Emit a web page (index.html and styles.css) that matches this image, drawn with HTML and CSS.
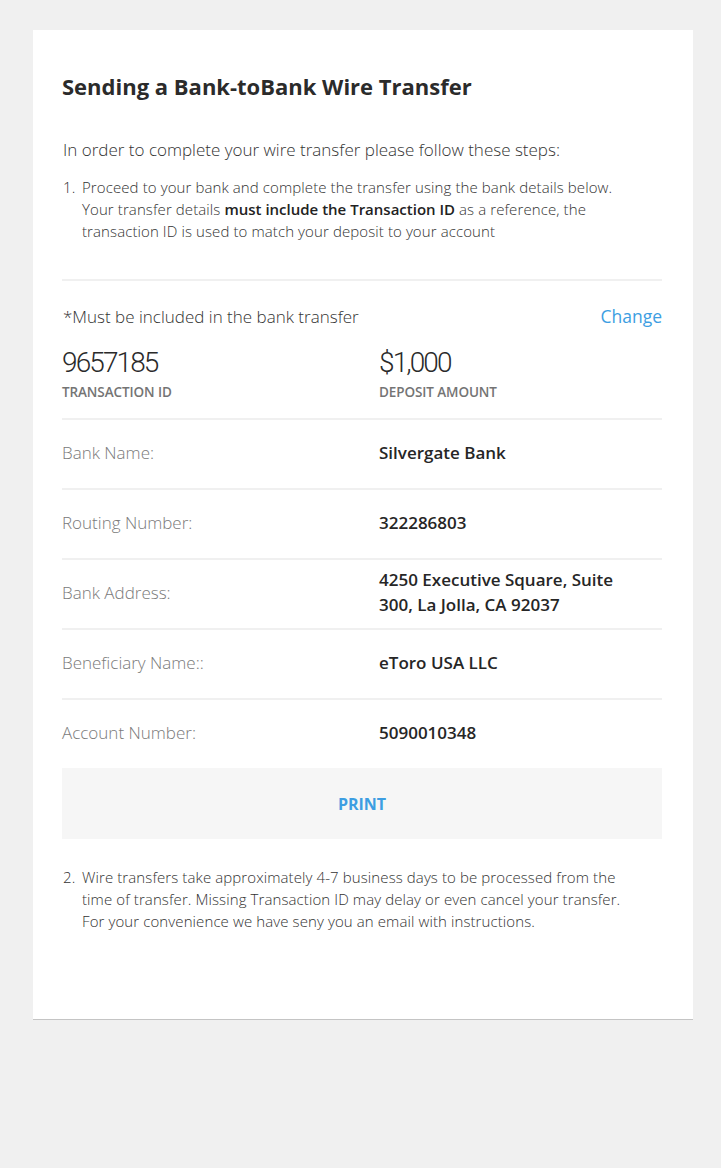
FILE: index.html
```html
<!DOCTYPE html>
<html>
<head>
<meta charset="utf-8">
<link rel="stylesheet" href="styles.css">
</head>
<body>
<div class="card">
  <h1 class="title">Sending a Bank-toBank Wire Transfer</h1>
  <p class="intro">In order to complete your wire transfer please follow these steps:</p>
  <ol class="steps">
    <li><span class="num">1.</span><span class="txt">Proceed to your bank and complete the transfer using the bank details below. Your transfer details <b>must include the Transaction ID</b> as a reference, the transaction ID is used to match your deposit to your account</span></li>
  </ol>
  <div class="details">
    <div class="must-row">
      <span class="must">*Must be included in the bank transfer</span>
      <a class="change">Change</a>
    </div>
    <div class="summary">
      <div class="sum-col">
        <div class="big">9657185</div>
        <div class="caption">TRANSACTION ID</div>
      </div>
      <div class="sum-col">
        <div class="big">$1,000</div>
        <div class="caption">DEPOSIT AMOUNT</div>
      </div>
    </div>
    <div class="row"><div class="label">Bank Name:</div><div class="value">Silvergate Bank</div></div>
    <div class="row"><div class="label">Routing Number:</div><div class="value">322286803</div></div>
    <div class="row"><div class="label">Bank Address:</div><div class="value">4250 Executive Square, Suite 300, La Jolla, CA 92037</div></div>
    <div class="row"><div class="label">Beneficiary Name::</div><div class="value">eToro USA LLC</div></div>
    <div class="row"><div class="label">Account Number:</div><div class="value">5090010348</div></div>
    <div class="print">PRINT</div>
  </div>
  <ol class="steps second">
    <li><span class="num">2.</span><span class="txt">Wire transfers take approximately 4-7 business days to be processed from the time of transfer. Missing Transaction ID may delay or even cancel your transfer. For your convenience we have seny you an email with instructions.</span></li>
  </ol>
</div>
</body>
</html>
```
FILE: styles.css
```css
html, body {
  margin: 0;
  padding: 0;
  background: #f0f0f0;
}
body {
  font-family: "Open Sans", "Liberation Sans", sans-serif;
  color: #333;
  padding: 30px 28px 0 33px;
}
.card {
  width: 660px;
  height: 990px;
  box-sizing: border-box;
  background: #fff;
  border-bottom: 1px solid #c4c4c4;
  padding: 42px 31px 0 29px;
}
.title {
  margin: 0;
  font-size: 22px;
  font-weight: 700;
  color: #2b2b2b;
  line-height: 28px;
}
.intro {
  margin: 38px 0 0 1px;
  font-size: 17px;
  font-weight: 300;
  line-height: 24px;
  color: #333;
}
.steps {
  list-style: none;
  margin: 14px 32px 0 1px;
  padding: 0;
  font-size: 15px;
  font-weight: 300;
  line-height: 22px;
  color: #333;
  letter-spacing: 0.1px;
}
.steps li {
  display: flex;
}
.steps .num {
  flex: 0 0 19px;
}
.steps .txt {
  flex: 1;
}
.steps b {
  font-weight: 600;
  color: #222;
  letter-spacing: 0;
}
.details {
  margin-top: 37px;
  border-top: 2px solid #f0f0f0;
}
.must-row {
  display: flex;
  justify-content: space-between;
  align-items: baseline;
  padding-top: 23px;
}
.must {
  font-size: 17px;
  font-weight: 300;
  color: #333;
  padding-left: 1px;
}
.change {
  font-size: 17.5px;
  color: #3d9ee2;
}
.summary {
  display: flex;
  padding: 19px 0 17px;
  border-bottom: 2px solid #f0f0f0;
}
.sum-col {
  flex: 0 0 317px;
}
.sum-col + .sum-col {
  flex: 1;
}
.big {
  font-family: Roboto, "Liberation Sans", sans-serif;
  font-weight: 300;
  font-size: 28px;
  line-height: 32px;
  letter-spacing: -1.9px;
  color: #2a2a2a;
}
.caption {
  font-size: 13.5px;
  font-weight: 600;
  color: #747474;
  letter-spacing: -0.1px;
  margin-top: 4px;
}
.row {
  display: flex;
  align-items: center;
  height: 68px;
  box-sizing: content-box;
  padding-bottom: 0;
  border-bottom: 2px solid #f0f0f0;
}
.row .label,
.row .value {
  position: relative;
  top: -2px;
}
.row .label {
  flex: 0 0 317px;
  font-size: 17px;
  font-weight: 300;
  color: #7a7a7a;
}
.row .value {
  flex: 1;
  font-size: 17px;
  font-weight: 600;
  color: #262626;
  line-height: 25px;
  padding-right: 40px;
}
.print {
  height: 71px;
  background: #f6f6f6;
  display: flex;
  align-items: center;
  justify-content: center;
  font-size: 16px;
  font-weight: 700;
  color: #3d9ee2;
  margin-top: -2px;
}
.steps.second {
  margin-top: 27px;
}
```
